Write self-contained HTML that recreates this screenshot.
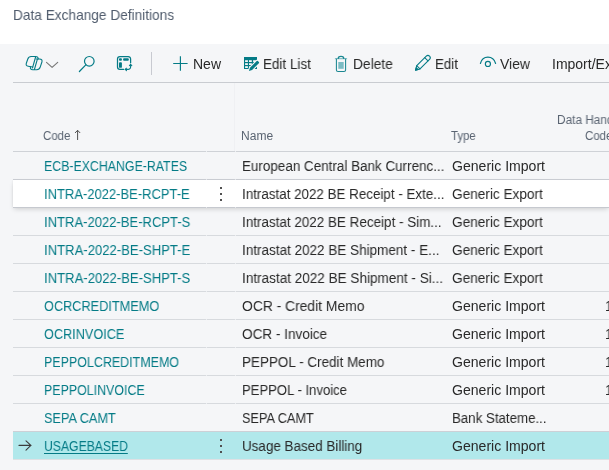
<!DOCTYPE html>
<html><head><meta charset="utf-8"><title>Data Exchange Definitions</title>
<style>
*{box-sizing:border-box;margin:0;padding:0}
html,body{width:609px;height:470px;overflow:hidden;background:#fff}
body{font-family:"Liberation Sans",sans-serif;position:relative;color:#212121}
.t{position:absolute;white-space:nowrap;line-height:20px;transform-origin:0 50%;will-change:transform}
.a{position:absolute}
#main{left:0;top:44px;width:609px;height:426px;background:#f5f6f8}
#tbline{left:13px;top:82px;width:596px;height:1px;background:#c9ccd1}
#sep{left:151px;top:52px;width:1px;height:23px;background:#c8cad1}
#vline{left:234px;top:83px;width:1px;height:68px;background:#eff0f3}
.ln{position:absolute;left:13px;width:596px;height:1px;background:#d7dade}
.gap{position:absolute;width:1px;height:1px;background:#eceef1}
#hover{left:13px;top:180px;width:596px;height:27px;background:#fff;box-shadow:0 3px 5px -1px rgba(0,0,0,.17),0 0 2px rgba(0,0,0,.08)}
#sel{left:13px;top:432px;width:596px;height:27px;background:#b1e8eb}
svg{position:absolute;overflow:visible}
</style></head><body>
<div class="a" id="main"></div>
<div class="a" id="tbline"></div><div class="a" id="sep"></div><div class="a" id="vline"></div>
<div class="ln" style="top:151px;background:#cfd2d7"></div>
<div class="gap" style="left:206px;top:151px"></div>
<div class="gap" style="left:235px;top:151px"></div>
<div class="ln" style="top:179px;background:#d7dade"></div>
<div class="gap" style="left:206px;top:179px"></div>
<div class="gap" style="left:235px;top:179px"></div>
<div class="ln" style="top:207px;background:#d7dade"></div>
<div class="gap" style="left:206px;top:207px"></div>
<div class="gap" style="left:235px;top:207px"></div>
<div class="ln" style="top:235px;background:#d7dade"></div>
<div class="gap" style="left:206px;top:235px"></div>
<div class="gap" style="left:235px;top:235px"></div>
<div class="ln" style="top:263px;background:#d7dade"></div>
<div class="gap" style="left:206px;top:263px"></div>
<div class="gap" style="left:235px;top:263px"></div>
<div class="ln" style="top:291px;background:#d7dade"></div>
<div class="gap" style="left:206px;top:291px"></div>
<div class="gap" style="left:235px;top:291px"></div>
<div class="ln" style="top:319px;background:#d7dade"></div>
<div class="gap" style="left:206px;top:319px"></div>
<div class="gap" style="left:235px;top:319px"></div>
<div class="ln" style="top:347px;background:#d7dade"></div>
<div class="gap" style="left:206px;top:347px"></div>
<div class="gap" style="left:235px;top:347px"></div>
<div class="ln" style="top:375px;background:#d7dade"></div>
<div class="gap" style="left:206px;top:375px"></div>
<div class="gap" style="left:235px;top:375px"></div>
<div class="ln" style="top:403px;background:#d7dade"></div>
<div class="gap" style="left:206px;top:403px"></div>
<div class="gap" style="left:235px;top:403px"></div>
<div class="ln" style="top:431px;background:#d7dade"></div>
<div class="gap" style="left:206px;top:431px"></div>
<div class="gap" style="left:235px;top:431px"></div>
<div class="a" id="hover"></div><div class="a" id="sel"></div>
<div class="ln" style="top:431px;background:#cdd0d6"></div><div class="ln" style="top:459px;background:#dfe1e4"></div><div class="ln" style="top:179px;background:#c9ccd2"></div><div class="ln" style="top:207px;background:#c6c9cf"></div>
<div class="gap" style="left:206px;top:179px;background:#e4e6ea"></div>
<div class="gap" style="left:235px;top:179px;background:#e4e6ea"></div>
<div class="gap" style="left:206px;top:207px;background:#e4e6ea"></div>
<div class="gap" style="left:235px;top:207px;background:#e4e6ea"></div>
<div class="t" style="left:13.1px;top:5.38px;font-size:14.5px;color:#505c6d;transform:scaleX(0.9427);">Data Exchange Definitions</div>
<div class="t" style="left:192.9px;top:54.25px;font-size:14px;color:#292929;transform:scaleX(0.9994);">New</div>
<div class="t" style="left:263.1px;top:54.25px;font-size:14px;color:#292929;transform:scaleX(0.9616);">Edit List</div>
<div class="t" style="left:352.9px;top:54.25px;font-size:14px;color:#292929;transform:scaleX(0.9835);">Delete</div>
<div class="t" style="left:434.9px;top:54.25px;font-size:14px;color:#292929;transform:scaleX(0.9534);">Edit</div>
<div class="t" style="left:500.1px;top:54.25px;font-size:14px;color:#292929;transform:scaleX(0.9936);">View</div>
<div class="t" style="left:551.9px;top:54.25px;font-size:14px;color:#292929;transform:scaleX(1.0000);">Import/Ex</div>
<div class="t" style="left:42.8px;top:126.04px;font-size:12px;color:#5a6472;transform:scaleX(0.9551);">Code</div>
<div class="t" style="left:240.9px;top:126.04px;font-size:12px;color:#5a6472;transform:scaleX(1.0026);">Name</div>
<div class="t" style="left:451.0px;top:126.04px;font-size:12px;color:#5a6472;transform:scaleX(0.9494);">Type</div>
<div class="t" style="left:556.9px;top:110.14px;font-size:12px;color:#5a6472;transform:scaleX(0.9850);">Data Hand</div>
<div class="t" style="left:584.7px;top:126.04px;font-size:12px;color:#5a6472;transform:scaleX(0.9551);">Code</div>
<div class="t" style="left:43.9px;top:156.15px;font-size:14px;color:#047b86;transform:scaleX(0.8815);">ECB-EXCHANGE-RATES</div>
<div class="t" style="left:241.7px;top:156.15px;font-size:14px;color:#292929;transform:scaleX(0.9597);">European Central Bank Currenc...</div>
<div class="t" style="left:451.6px;top:156.15px;font-size:14px;color:#292929;transform:scaleX(1.0044);">Generic Import</div>
<div class="t" style="left:43.9px;top:184.15px;font-size:14px;color:#047b86;transform:scaleX(0.9271);">INTRA-2022-BE-RCPT-E</div>
<div class="t" style="left:241.7px;top:184.15px;font-size:14px;color:#292929;transform:scaleX(0.9562);">Intrastat 2022 BE Receipt - Exte...</div>
<div class="t" style="left:451.6px;top:184.15px;font-size:14px;color:#292929;transform:scaleX(0.9724);">Generic Export</div>
<div class="t" style="left:43.9px;top:212.15px;font-size:14px;color:#047b86;transform:scaleX(0.9309);">INTRA-2022-BE-RCPT-S</div>
<div class="t" style="left:241.7px;top:212.15px;font-size:14px;color:#292929;transform:scaleX(0.9607);">Intrastat 2022 BE Receipt - Sim...</div>
<div class="t" style="left:451.6px;top:212.15px;font-size:14px;color:#292929;transform:scaleX(0.9724);">Generic Export</div>
<div class="t" style="left:43.9px;top:240.15px;font-size:14px;color:#047b86;transform:scaleX(0.9356);">INTRA-2022-BE-SHPT-E</div>
<div class="t" style="left:241.7px;top:240.15px;font-size:14px;color:#292929;transform:scaleX(0.9645);">Intrastat 2022 BE Shipment - E...</div>
<div class="t" style="left:451.6px;top:240.15px;font-size:14px;color:#292929;transform:scaleX(0.9724);">Generic Export</div>
<div class="t" style="left:43.9px;top:268.15px;font-size:14px;color:#047b86;transform:scaleX(0.9356);">INTRA-2022-BE-SHPT-S</div>
<div class="t" style="left:241.7px;top:268.15px;font-size:14px;color:#292929;transform:scaleX(0.9674);">Intrastat 2022 BE Shipment - Si...</div>
<div class="t" style="left:451.6px;top:268.15px;font-size:14px;color:#292929;transform:scaleX(0.9724);">Generic Export</div>
<div class="t" style="left:43.9px;top:296.15px;font-size:14px;color:#047b86;transform:scaleX(0.9087);">OCRCREDITMEMO</div>
<div class="t" style="left:241.7px;top:296.15px;font-size:14px;color:#292929;transform:scaleX(0.9896);">OCR - Credit Memo</div>
<div class="t" style="left:451.6px;top:296.15px;font-size:14px;color:#292929;transform:scaleX(1.0044);">Generic Import</div>
<div class="t" style="left:605.3px;top:296.15px;font-size:14px;color:#292929;transform:scaleX(0.9500);">1</div>
<div class="t" style="left:43.9px;top:324.15px;font-size:14px;color:#047b86;transform:scaleX(0.9066);">OCRINVOICE</div>
<div class="t" style="left:241.7px;top:324.15px;font-size:14px;color:#292929;transform:scaleX(0.9690);">OCR - Invoice</div>
<div class="t" style="left:451.6px;top:324.15px;font-size:14px;color:#292929;transform:scaleX(1.0044);">Generic Import</div>
<div class="t" style="left:605.3px;top:324.15px;font-size:14px;color:#292929;transform:scaleX(0.9500);">1</div>
<div class="t" style="left:43.9px;top:352.15px;font-size:14px;color:#047b86;transform:scaleX(0.8899);">PEPPOLCREDITMEMO</div>
<div class="t" style="left:241.7px;top:352.15px;font-size:14px;color:#292929;transform:scaleX(0.9616);">PEPPOL - Credit Memo</div>
<div class="t" style="left:451.6px;top:352.15px;font-size:14px;color:#292929;transform:scaleX(1.0044);">Generic Import</div>
<div class="t" style="left:605.3px;top:352.15px;font-size:14px;color:#292929;transform:scaleX(0.9500);">1</div>
<div class="t" style="left:43.9px;top:380.15px;font-size:14px;color:#047b86;transform:scaleX(0.8865);">PEPPOLINVOICE</div>
<div class="t" style="left:241.7px;top:380.15px;font-size:14px;color:#292929;transform:scaleX(0.9340);">PEPPOL - Invoice</div>
<div class="t" style="left:451.6px;top:380.15px;font-size:14px;color:#292929;transform:scaleX(1.0044);">Generic Import</div>
<div class="t" style="left:605.3px;top:380.15px;font-size:14px;color:#292929;transform:scaleX(0.9500);">1</div>
<div class="t" style="left:43.9px;top:408.15px;font-size:14px;color:#047b86;transform:scaleX(0.9065);">SEPA CAMT</div>
<div class="t" style="left:241.7px;top:408.15px;font-size:14px;color:#292929;transform:scaleX(0.9065);">SEPA CAMT</div>
<div class="t" style="left:451.6px;top:408.15px;font-size:14px;color:#292929;transform:scaleX(0.9487);">Bank Stateme...</div>
<div class="t" style="left:43.9px;top:436.15px;font-size:14px;color:#047b86;transform:scaleX(0.8706);text-decoration:underline;text-underline-offset:2px;">USAGEBASED</div>
<div class="t" style="left:241.7px;top:436.15px;font-size:14px;color:#292929;transform:scaleX(0.9593);">Usage Based Billing</div>
<div class="t" style="left:451.6px;top:436.15px;font-size:14px;color:#292929;transform:scaleX(1.0044);">Generic Import</div>
<svg width="609" height="470" viewBox="0 0 609 470" style="left:0;top:0" fill="none" stroke-linecap="round" stroke-linejoin="round">
<!-- copilot -->
<g stroke="#047b86" stroke-width="1.100">
<path d="M31.200 56.500H35.600C37.400 56.500 38.200 57.300 38.300 58.900"/>
<path d="M31.200 56.500C29.200 56.500 28.400 57.300 27.800 59L26.400 63C25.700 65 26.400 65.900 28.200 66.200L32.800 67"/>
<path d="M35.600 57L32.500 67.900M37.400 59.200L34.400 69.500"/>
<path d="M36.200 59H39.400C41.700 59 42.500 60.200 41.900 62L40.300 66.900C39.600 69 38.600 69.700 36.700 69.700H32.800C30.800 69.700 30 68.700 30.500 66.800"/>
</g>
<!-- chevron -->
<path d="M46.500 62.400l5.600 5 5.600-5" stroke="#767676" stroke-width="1.1"/>
<!-- search -->
<g stroke="#047b86" stroke-width="1.2">
<circle cx="89.300" cy="61.300" r="4.800"/>
<path d="M85.800 64.900l-6.400 6.600"/>
</g>
<!-- layout -->
<g stroke="#047b86" stroke-width="1.250">
<path d="M123.700 69.400H119.900a2.400 2.400 0 0 1-2.400-2.400V59a2.400 2.400 0 0 1 2.400-2.400H128.200a2.400 2.400 0 0 1 2.400 2.400V62.800"/>
<path d="M130.600 64.800V67a2.400 2.400 0 0 1-2.400 2.400H125.600" stroke-width="1.100"/>
<path d="M129.400 65.700l1.200-1.300 1.200 1.300M126.500 68.200l-1.300 1.200 1.300 1.200" stroke-width="1.050"/>
</g>
<g fill="#047b86" stroke="none">
<rect x="119" y="58.300" width="2.900" height="2.400" rx=".9"/>
<rect x="123.100" y="58.300" width="5.700" height="2.400" rx=".9"/>
<rect x="119" y="62.300" width="2.900" height="5.500" rx=".9"/>
</g>
<!-- plus -->
<path d="M180.400 56.300v14.400M173.200 63.500h14.400" stroke="#047b86" stroke-width="1.15" stroke-linecap="butt"/>
<!-- edit list -->
<g>
<rect x="244" y="57" width="13" height="12" fill="#047b86" stroke="none"/>
<g fill="#f5f6f8" stroke="none">
<rect x="245.100" y="60.200" width="2.800" height="1.800"/><rect x="249" y="60.200" width="2.800" height="1.800"/><rect x="253.100" y="60.200" width="2.800" height="1.800"/>
<rect x="245.100" y="63.200" width="2.800" height="1.800"/><rect x="249" y="63.200" width="2.800" height="1.800"/><rect x="253.100" y="63.200" width="2.800" height="1.800"/>
<rect x="245.100" y="66.200" width="2.800" height="1.800"/><rect x="249" y="66.200" width="2.800" height="1.800"/><rect x="253.100" y="66.200" width="2.800" height="1.800"/>
</g>
<g transform="translate(248.900 71) rotate(-45)">
<path d="M0 0l3-1.500h9.600a.8.800 0 0 1 .8.800v1.400a.8.800 0 0 1-.8.800h-9.600z" fill="#f5f6f8" stroke="#f5f6f8" stroke-width="2.200"/>
<path d="M0 0l3-1.500h9.600a.8.800 0 0 1 .8.800v1.400a.8.800 0 0 1-.8.800h-9.600z" fill="#047b86" stroke="none"/>
</g>
</g>
<!-- trash -->
<g stroke="#1a8791" stroke-width="1.050">
<path d="M335.300 58.700h11.400" stroke-width=".8" stroke="#4ba2aa"/>
<path d="M338.200 58.300c.2-1.300 1.300-1.900 2.800-1.900s2.600.6 2.800 1.900" stroke-width="1.400"/>
<path d="M336.400 59v10.900c0 1 .7 1.600 1.600 1.600h6c.9 0 1.600-.6 1.600-1.600v-10.900"/>
<rect x="338.300" y="62" width="5.400" height="6.800" fill="#7bbcc4" stroke="none"/>
</g>
<!-- pencil -->
<g transform="translate(414.900 70.750) rotate(-45)" stroke="#047b86" stroke-width="1.100">
<path d="M.9 0l4-2.300h13.500a2.300 2.300 0 0 1 0 4.600h-13.500z"/>
<path d="M4.900-2.300v4.600M16.200 -2.300v4.600" stroke-width="1"/>
<path d="M.9 0l2.200-1.200v2.400z" fill="#047b86"/>
</g>
<!-- eye -->
<g stroke="#047b86" stroke-width="1.150">
<path d="M480.400 63.500c1-3.800 4-6.300 7.500-6.300s6.600 2.500 7.700 6.300"/>
<circle cx="487.900" cy="63.950" r="2.550"/>
</g>
<!-- sort arrow -->
<path d="M77.600 139.600v-9M75.300 132.700l2.300-2.400 2.300 2.400" stroke="#505050" stroke-width="1"/>
<!-- row arrow -->
<path d="M19 445.400h12M26 440.800l4.900 4.600-4.900 4.700" stroke="#3c3c3c" stroke-width="1.100"/>
<!-- dots -->
<g fill="#505050" stroke="none">
<rect x="220" y="187" width="2" height="2"/><rect x="220" y="193" width="2" height="2"/><rect x="220" y="199" width="2" height="2"/>
<rect x="220" y="439" width="2" height="2"/><rect x="220" y="445" width="2" height="2"/><rect x="220" y="451" width="2" height="2"/>
</g>
</svg>

</body></html>
